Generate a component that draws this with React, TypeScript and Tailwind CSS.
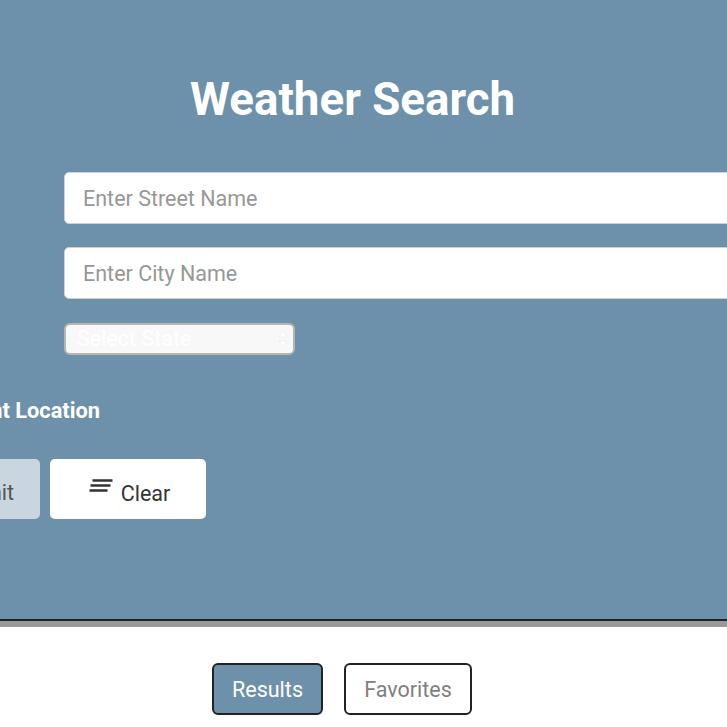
import { useState } from 'react'

function ClearIcon() {
  return (
    <svg width="24" height="14" viewBox="0 0 24 14" className="mb-[17px] mr-[8px] shrink-0">
      <path d="M3.5 1.5H23.5M1.5 6.5H21.5M.5 11.5H18.5" stroke="#333" strokeWidth="2.4" fill="none" />
    </svg>
  )
}

export default function App() {
  const [tab] = useState('results')

  return (
    <div className="flex h-[727px] w-[727px] flex-col overflow-hidden bg-white font-['Roboto',sans-serif]">
      <div className="h-[619px] shrink-0 bg-[#6d91ab] pt-[73px]">
        <h1 className="ml-[190px] whitespace-nowrap text-[45.7px] font-bold leading-[54px] text-white">
          Weather Search
        </h1>

        <div className="mt-[45px] flex flex-col pl-[64px]">
          <input
            className="h-[52px] w-[760px] rounded-[5px] border border-[#d0d0d0] bg-white px-[18px] text-[21.5px] outline-none placeholder:text-[#979797]"
            placeholder="Enter Street Name"
            readOnly
          />
          <input
            className="mt-[23px] h-[52px] w-[760px] rounded-[5px] border border-[#d0d0d0] bg-white px-[18px] text-[21.5px] outline-none placeholder:text-[#979797]"
            placeholder="Enter City Name"
            readOnly
          />
          <div className="relative mt-[24px] flex h-[32px] w-[231px] items-center rounded-[6px] border-2 border-[#b9b4ae] bg-[#f8f8f8] pl-[11px] text-[21.5px] text-white">
            Select State
            <svg width="10" height="18" viewBox="0 0 10 18" className="absolute right-[5px] top-[5px]">
              <path d="M5 1 9 7H1ZM5 17 1 11H9Z" fill="#ffffff" stroke="#e6e6e6" strokeWidth="0.5" />
            </svg>
          </div>
        </div>

        <div className="-ml-[100px] mt-[43px] w-[200px] whitespace-nowrap text-right text-[21.8px] font-bold leading-[26px] text-white">
          Current Location
        </div>

        <div className="mt-[35px] flex gap-[10px]">
          <button className="-ml-[100px] flex h-[60px] w-[140px] items-center justify-end rounded-[5px] bg-[#c9d6e0] pr-[26px] pt-[8px] text-[21.5px] text-[#555]">
            Submit
          </button>
          <button className="flex h-[60px] w-[156px] items-center justify-center rounded-[5px] bg-white pl-[3px] pt-[10px] text-[21.5px] text-[#333]">
            <ClearIcon />
            Clear
          </button>
        </div>
      </div>

      <div className="h-[8px] shrink-0 border-t-2 border-[#222] bg-[#999]" />

      <div className="flex gap-[21px] pl-[212px] pt-[36px]">
        <button
          className={`h-[52px] w-[111px] rounded-[6px] border-2 border-[#222] pt-[2px] text-[21.5px] ${
            tab === 'results' ? 'bg-[#6d91ab] text-white' : 'bg-white text-[#777]'
          }`}
        >
          Results
        </button>
        <button className="h-[52px] w-[128px] rounded-[6px] border-2 border-[#222] bg-white pt-[2px] text-[21.5px] text-[#808080]">
          Favorites
        </button>
      </div>
    </div>
  )
}
